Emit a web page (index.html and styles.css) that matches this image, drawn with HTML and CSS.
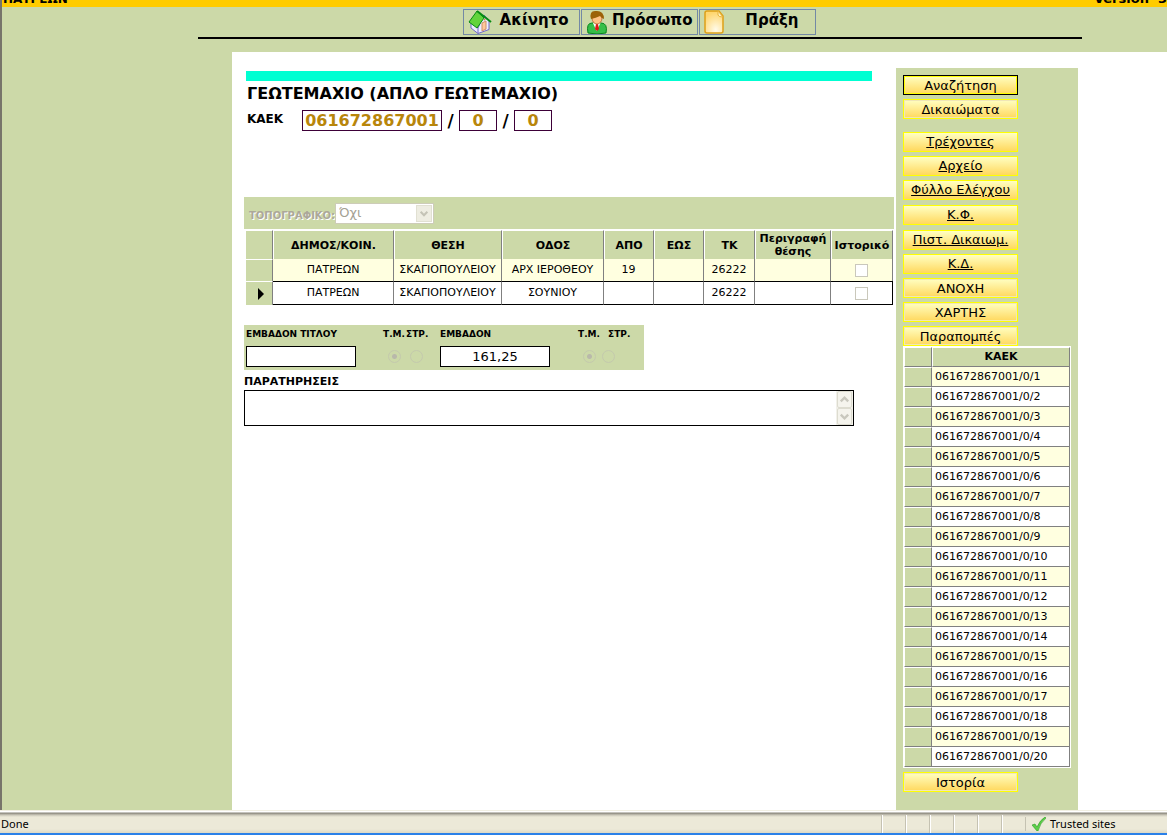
FILE: index.html
```
<!DOCTYPE html>
<html lang="el">
<head>
<meta charset="utf-8">
<title>ΓΕΩΤΕΜΑΧΙΟ</title>
<link rel="stylesheet" href="styles.css">
</head>
<body>
<div class="viewport">
  <header class="banner"><span class="office">ΠΑΤΡΕΩΝ</span><span class="version">Version &nbsp;3</span></header>
  <nav class="toolbar">
    <button class="tool" type="button">
      <svg class="tool-icon" viewBox="0 0 24 24" aria-hidden="true">
        <path d="M3 13v5l7 5.500 11-4V10l-5-5-6 13Z" fill="#eceeff" stroke="#7067c8"/>
        <path d="M10 18v5.500" stroke="#7067c8"/>
        <path d="M9 1 1 12l8 6 7-10Z" fill="#62d33c" stroke="#078c13"/>
        <path d="M9 1 23 12" stroke="#078c13" stroke-width="2"/>
        <path d="M14 13l4-2v8l-4 2Z" fill="#ffc89a" stroke="#cf8f68"/>
        <circle cx="16.500" cy="9.500" r="1" fill="#cc8261"/>
      </svg><span>Ακίνητο</span></button>
    <button class="tool" type="button">
      <svg class="tool-icon" viewBox="0 0 24 24" aria-hidden="true">
        <path d="M2 23Q0 13 6 13h9q7 0 5 10-9 2-18 0Z" fill="#35be48" stroke="#07851c"/>
        <path d="m7 13 3.500 8 4-8Z" fill="#fff"/>
        <path d="m10 14h2l1 5-2 2-2-2Z" fill="#e21818"/>
        <ellipse cx="11" cy="8" rx="5" ry="6" fill="#ffc184" stroke="#bd7842"/>
        <path d="M5 9Q3 1 9 1q9-1 9 8-3-1-4-3-4 2-9 3Z" fill="#9c6208"/>
      </svg><span>Πρόσωπο</span></button>
    <button class="tool" type="button">
      <svg class="tool-icon" viewBox="0 0 24 24" aria-hidden="true">
        <defs><radialGradient id="sheet" cx=".6" cy=".85" r=".8"><stop offset="0" stop-color="#fffbea"/><stop offset="1" stop-color="#ffd66f"/></radialGradient></defs>
        <path d="M3 1h12l4 5v15q0 2-2 2H3q-2 0-2-2V3q0-2 2-2Z" fill="url(#sheet)" stroke="#dda018" stroke-width="1.500"/>
        <path d="M14 1v4q0 2 5 2Z" fill="#fff0b9" stroke="#e7b23d"/>
      </svg><span>Πράξη</span></button>
  </nav>

  <div class="page">
    <main class="record">
      <div class="accent"></div>
      <h1 class="title">ΓΕΩΤΕΜΑΧΙΟ (ΑΠΛΟ ΓΕΩΤΕΜΑΧΙΟ)</h1>
      <div class="code-row">
        <label class="code-label" for="kaek">ΚΑΕΚ</label>
        <input class="code code-main" id="kaek" value="061672867001">
        <span class="slash">/</span>
        <input class="code code-part" aria-label="ΚΑΕΚ 2" value="0">
        <span class="slash">/</span>
        <input class="code code-part" aria-label="ΚΑΕΚ 3" value="0">
      </div>

      <div class="survey">
        <label class="survey-label" for="topo">ΤΟΠΟΓΡΑΦΙΚΟ:</label>
        <div class="select-box">
          <select id="topo" disabled><option>Όχι</option></select>
          <svg class="select-arrow" viewBox="0 0 16 18" aria-hidden="true"><path d="m4 7 4 4 4-4" fill="none" stroke="#c4c3b6" stroke-width="2.500"/></svg>
        </div>
      </div>
      <table class="places">
        <colgroup><col class="c-mark"><col class="c-town"><col class="c-place"><col class="c-road"><col class="c-num"><col class="c-num"><col class="c-zip"><col class="c-desc"><col class="c-hist"></colgroup>
        <thead><tr><th></th><th>ΔΗΜΟΣ/ΚΟΙΝ.</th><th>ΘΕΣΗ</th><th>ΟΔΟΣ</th><th>ΑΠΟ</th><th>ΕΩΣ</th><th>ΤΚ</th><th>Περιγραφή θέσης</th><th>Ιστορικό</th></tr></thead>
        <tbody>
          <tr><th></th><td>ΠΑΤΡΕΩΝ</td><td>ΣΚΑΓΙΟΠΟΥΛΕΙΟΥ</td><td>ΑΡΧ ΙΕΡΟΘΕΟΥ</td><td>19</td><td></td><td>26222</td><td></td><td><input class="tick" type="checkbox" aria-label="Ιστορικό" disabled></td></tr>
          <tr class="current"><th><svg class="marker" viewBox="0 0 6 12" aria-hidden="true"><path d="M0 0l6 6-6 6Z"/></svg></th><td>ΠΑΤΡΕΩΝ</td><td>ΣΚΑΓΙΟΠΟΥΛΕΙΟΥ</td><td>ΣΟΥΝΙΟΥ</td><td></td><td></td><td>26222</td><td></td><td><input class="tick" type="checkbox" aria-label="Ιστορικό" disabled></td></tr>
        </tbody>
      </table>

      <div class="areas">
        <label class="area-label" for="area-title">ΕΜΒΑΔΟΝ ΤΙΤΛΟΥ</label>
        <label class="unit" for="t1">Τ.Μ.</label><label class="unit near" for="s1">ΣΤΡ.</label>
        <label class="area-label" for="area">ΕΜΒΑΔΟΝ</label>
        <label class="unit" for="t2">Τ.Μ.</label><label class="unit far" for="s2">ΣΤΡ.</label>
        <input class="area-input" id="area-title">
        <input class="radio" type="radio" id="t1" name="u1" checked disabled><input class="radio radio-near" type="radio" id="s1" name="u1" disabled>
        <input class="area-input" id="area" value="161,25">
        <input class="radio" type="radio" id="t2" name="u2" checked disabled><input class="radio radio-far" type="radio" id="s2" name="u2" disabled>
      </div>

      <label class="notes-label" for="notes">ΠΑΡΑΤΗΡΗΣΕΙΣ</label>
      <div class="notes-box">
        <textarea class="notes" id="notes"></textarea>
        <div class="scroller" aria-hidden="true">
          <svg class="scroll-step" viewBox="0 0 14 16"><path d="m3 10 4-4 4 4" fill="none" stroke="#c9c8be" stroke-width="2.500"/></svg>
          <svg class="scroll-step" viewBox="0 0 14 16"><path d="m3 6 4 4 4-4" fill="none" stroke="#c9c8be" stroke-width="2.500"/></svg>
        </div>
      </div>
    </main>

    <aside class="side">
      <div class="group">
        <button class="action default" type="button">Αναζήτηση</button>
        <button class="action bevel" type="button">Δικαιώματα</button>
      </div>
      <div class="group">
        <a class="action" href="#">Τρέχοντες</a>
        <a class="action" href="#">Αρχείο</a>
        <a class="action" href="#">Φύλλο Ελέγχου</a>
        <a class="action" href="#">Κ.Φ.</a>
        <a class="action" href="#">Πιστ. Δικαιωμ.</a>
        <a class="action" href="#">Κ.Δ.</a>
        <button class="action bevel" type="button">ΑΝΟΧΗ</button>
        <button class="action bevel" type="button">ΧΑΡΤΗΣ</button>
        <button class="action bevel" type="button">Παραπομπές</button>
      </div>
      <table class="codes">
        <colgroup><col class="c-mark"><col></colgroup>
        <thead><tr><th></th><th>ΚΑΕΚ</th></tr></thead>
        <tbody>
          <tr><th></th><td>061672867001/0/1</td></tr>
          <tr><th></th><td>061672867001/0/2</td></tr>
          <tr><th></th><td>061672867001/0/3</td></tr>
          <tr><th></th><td>061672867001/0/4</td></tr>
          <tr><th></th><td>061672867001/0/5</td></tr>
          <tr><th></th><td>061672867001/0/6</td></tr>
          <tr><th></th><td>061672867001/0/7</td></tr>
          <tr><th></th><td>061672867001/0/8</td></tr>
          <tr><th></th><td>061672867001/0/9</td></tr>
          <tr><th></th><td>061672867001/0/10</td></tr>
          <tr><th></th><td>061672867001/0/11</td></tr>
          <tr><th></th><td>061672867001/0/12</td></tr>
          <tr><th></th><td>061672867001/0/13</td></tr>
          <tr><th></th><td>061672867001/0/14</td></tr>
          <tr><th></th><td>061672867001/0/15</td></tr>
          <tr><th></th><td>061672867001/0/16</td></tr>
          <tr><th></th><td>061672867001/0/17</td></tr>
          <tr><th></th><td>061672867001/0/18</td></tr>
          <tr><th></th><td>061672867001/0/19</td></tr>
          <tr><th></th><td>061672867001/0/20</td></tr>
        </tbody>
      </table>
      <button class="action bevel" type="button">Ιστορία</button>
    </aside>
  </div>
</div>
<footer class="status">
  <span class="status-text">Done</span>
  <span class="pane"></span><span class="pane"></span><span class="pane"></span><span class="pane"></span><span class="pane"></span><span class="pane"></span>
  <span class="zone">
    <svg class="check" viewBox="0 0 14 14" aria-hidden="true"><path d="M0 8l3-1 2 3Q8 3 13 0l1 1Q8 6 6 14H5Z" fill="#5bd048" stroke="#319b28" stroke-width=".6"/></svg>
    Trusted sites
  </span>
</footer>
</body>
</html>
```

FILE: styles.css
```
* { box-sizing: border-box; }

body {
  margin: 0;
  min-height: 100vh;
  display: flex;
  flex-direction: column;
  font: 11px/14px "DejaVu Sans", Verdana, sans-serif;
  color: #000;
  background: #ccd9a8;
}

input, select, textarea, button { font: inherit; color: inherit; margin: 0; border-radius: 0; }

.viewport { flex: 1; display: flex; flex-direction: column; border-left: 2px solid #77756a; }

.banner {
  height: 7px;
  overflow: hidden;
  display: flex;
  align-items: flex-end;
  justify-content: space-between;
  font-size: 13px;
  line-height: 16px;
  font-weight: bold;
  white-space: pre;
  background: #fc0;
}
.office { padding-left: 1px; font-size: 12px; }

.toolbar {
  display: flex;
  justify-content: center;
  gap: 1px;
  margin: 0 85px 13px 196px;
  padding: 2px 2px 2px 0;
  border-bottom: 2px solid #000;
}
.tool {
  display: flex;
  align-items: center;
  width: 117px;
  height: 26px;
  padding: 0 4px;
  border: 1px solid #7389a5;
  background: none;
  font-size: 15px;
  line-height: 18px;
  font-weight: bold;
}
.tool span { flex: 1; text-align: right; padding: 0 0 4px; }
.tool:first-child span { padding-right: 6px; }
.tool:last-child span { padding-right: 12px; }
.tool-icon { width: 24px; height: 24px; flex: none; fill: none; }

.page {
  flex: 1;
  display: flex;
  gap: 2px;
  margin-left: 230px;
  padding: 16px 89px 0 12px;
  background: #fff;
}

.record { flex: 1; min-width: 0; padding-top: 3px; }
.accent { height: 10px; margin: 0 22px 0 2px; background: #00ffd2; }
.title { margin: 3px 0 0 3px; font-size: 16px; line-height: 20px; white-space: nowrap; }

.code-row { display: flex; align-items: center; margin: 6px 0 0 3px; font-weight: bold; }
.code-label { width: 55px; padding-bottom: 4px; font-size: 12px; }
.code { height: 21px; padding: 0; border: 1px solid #3d0038; color: #b8860b; background: #fff; font-size: 16px; font-weight: bold; text-align: center; }
.code-main { width: 140px; }
.code-part { width: 38px; }
.slash { width: 17px; text-align: center; font-size: 17px; line-height: 20px; }

.survey { display: flex; align-items: center; height: 32px; margin-top: 66px; padding-left: 5px; background: #ccd9a8; }
.survey-label { width: 86px; padding-top: 6px; font-size: 10px; font-weight: bold; color: #aca899; text-shadow: 1px 1px #fff; white-space: nowrap; }
.select-box { display: flex; width: 99px; height: 21px; padding: 1px; border: 1px solid #cdccb8; background: #fff; }
.select-box select { flex: 1; min-width: 0; padding: 0 2px; border: 0; appearance: none; background: #fff; color: #a5a294; opacity: 1; font-size: 13px; }
.select-arrow { width: 16px; background: #eeede2; border: 1px solid #e1e0d2; }

.places { width: calc(100% - 1px); table-layout: fixed; border-collapse: separate; border-spacing: 0; margin-top: 1px; border-left: 2px solid #fff; }
.places th, .places td { padding: 0; text-align: center; border-right: 1px solid #808080; white-space: nowrap; }
.places thead th { height: 29px; border-top: 1px solid #fff; border-left: 1px solid #fff; background: #ccd9a8; line-height: 13px; white-space: normal; }
.places thead th:first-child { border-left: 0; }
.places td { height: 22px; background: #ffffe0; }
.places tbody th { border-top: 1px solid #fff; background: #ccd9a8; }
.places .current th { padding-left: 4px; }
.places .current td { height: 24px; border-top: 1px solid #000; border-bottom: 1px solid #000; background: #fff; }
.places .current td:last-child { border-right-color: #000; }
.c-mark { width: 27px; }
.c-town { width: 121px; }
.c-place { width: 108px; }
.c-road { width: 102px; }
.c-num { width: 50px; }
.c-zip { width: 51px; }
.c-desc { width: 76px; }
.marker { display: block; width: 6px; height: 12px; margin: 0 auto; }
.tick { display: block; appearance: none; width: 13px; height: 13px; margin: 0 auto; border: 1px solid #cac8bb; background: #fff; }

.areas {
  display: grid;
  grid-template-columns: 136px 24px 34px 136px 26px 42px;
  grid-template-rows: 17px 28px;
  align-items: center;
  width: 400px;
  max-width: 100%;
  margin-top: 20px;
  padding-left: 2px;
  background: #ccd9a8;
}
.area-label, .unit { font-size: 9px; font-weight: bold; white-space: nowrap; }
.unit { justify-self: center; }
.unit.near { justify-self: start; }
.unit.far { justify-self: start; padding-left: 6px; }
.area-input { width: 110px; height: 21px; padding: 0; border: 1px solid #000; background: #fff; text-align: center; font-size: 13px; }
.radio { appearance: none; justify-self: center; width: 13px; height: 13px; border: 1px solid #c4c9ad; border-radius: 50%; }
.radio:checked { background: radial-gradient(circle, #b9b9aa 2px, transparent 3px); }
.radio-near { justify-self: start; margin-left: 4px; }
.radio-far { justify-self: start; }

.notes-label { display: block; margin-top: 4px; font-weight: bold; line-height: 15px; }
.notes-box { display: flex; height: 36px; margin: 1px 40px 0 0; border: 1px solid #000; background: #fff; }
.notes { flex: 1; min-width: 0; border: 0; padding: 2px; resize: none; background: none; }
.scroller { display: flex; flex-direction: column; width: 17px; padding: 0 1px; background: #f2f1ea; }
.scroll-step { flex: 1; min-height: 0; border: 1px solid #dddcd0; border-radius: 2px; background: #f5f4ed; }

.side { flex: none; width: 182px; padding: 7px 7px 18px; background: #ccd9a8; }
.group { display: flex; flex-direction: column; gap: 4px; }
.group + .group { margin-top: 13px; }
.action {
  display: block;
  width: 115px;
  height: 20px;
  padding: 0;
  border: 1px solid #ff0;
  background: linear-gradient(#ffffc2, #ffd85e);
  color: #000;
  font-size: 13px;
  line-height: 18px;
  text-align: center;
  white-space: nowrap;
}
button.action { padding-top: 1px; }
.bevel { box-shadow: inset 0 0 0 1px #f0e6b8; }
.default { border-color: #000; box-shadow: inset 0 0 0 1px #ff0; }
.action:nth-child(4), .action:nth-child(5) { margin-top: 1px; }
.codes + .action { margin-top: 0; }

.codes { width: 168px; margin-bottom: 4px; table-layout: fixed; border-collapse: separate; border-spacing: 0; border: 1px solid #fff; }
.codes th, .codes td { height: 20px; padding: 0; border-right: 1px solid #808080; border-bottom: 1px solid #808080; }
.codes th { border-top: 1px solid #fff; border-left: 1px solid #fff; background: #ccd9a8; }
.codes .c-mark { width: 28px; }
.codes td { padding: 1px 0 0 3px; background: #fff; }
.codes tbody tr:nth-child(odd) td { background: #ffffe0; }

.status {
  display: flex;
  align-items: center;
  height: 25px;
  padding: 3px 0 0 1px;
  border-top: 1px solid #f2f0e4;
  border-bottom: 2px solid #2a80e8;
  background: linear-gradient(#fff 1px, #88857a 2px, #c9c6b8 4px, #ece9d8 6px, #ece9d8 18px, #dcd9c6);
  font: 11px/14px "Noto Sans", Tahoma, sans-serif;
}
.status-text { flex: 1; }
.pane { width: 24px; height: 18px; border-left: 1px solid #c5c2b2; box-shadow: inset 1px 0 #fff; }
.zone { display: flex; align-items: center; gap: 4px; width: 142px; padding-left: 6px; border-left: 1px solid #c5c2b2; }
.check { width: 14px; height: 14px; }
```
